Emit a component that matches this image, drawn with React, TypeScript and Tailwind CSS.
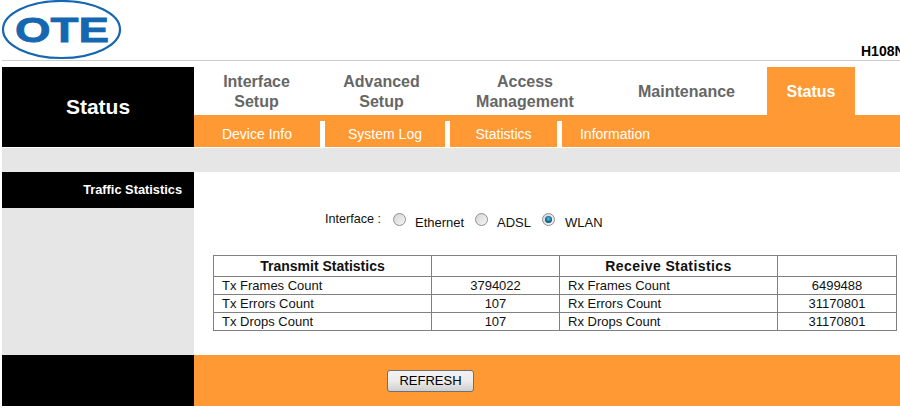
const F = "font-['Liberation_Sans',Arial,sans-serif]";

function Logo() {
  return (
    <svg width="122" height="60" viewBox="0 0 122 60" className="block">
      <ellipse cx="60.5" cy="29.5" rx="58.5" ry="28.5" fill="#fff" stroke="#1467b0" strokeWidth="2.2" />
      <text
        x="61"
        y="42"
        textAnchor="middle"
        textLength="94"
        lengthAdjust="spacingAndGlyphs"
        fontFamily="'Liberation Sans', Arial, sans-serif"
        fontWeight="700"
        fontSize="35"
        fill="#1467b0"
        stroke="#1467b0"
        strokeWidth="0.8"
      >
        OTE
      </text>
    </svg>
  );
}

function Tab({ w, lines, active }: { w: string; lines: string[]; active?: boolean }) {
  return (
    <div
      className={`${w} flex flex-col items-center justify-center pt-[2px] text-center text-[16px] leading-[20px] font-bold ${
        active ? "bg-[#ff9933] text-white" : "text-[#666666]"
      }`}
    >
      {lines.map((l) => (
        <span key={l}>{l}</span>
      ))}
    </div>
  );
}

function Sub({ w, label, last }: { w: string; label: string; last?: boolean }) {
  return (
    <div className={`${w} h-[26px] flex items-center justify-center text-[14px] text-white ${last ? "" : "border-r-[5px] border-white"}`}>
      {label}
    </div>
  );
}

function Radio({ on }: { on?: boolean }) {
  return (
    <span className="relative block w-[13px] h-[13px] rounded-full border border-[#8e8f8f] bg-gradient-to-br from-[#d5d5d5] to-[#f6f6f6]">
      {on && (
        <span className="absolute left-[2px] top-[2px] w-[7px] h-[7px] rounded-full bg-[radial-gradient(circle_at_50%_40%,#5fc0e8,#0b5f8d_60%,#123a52)]" />
      )}
    </span>
  );
}

const rows = [
  ["Tx Frames Count", "3794022", "Rx Frames Count", "6499488"],
  ["Tx Errors Count", "107", "Rx Errors Count", "31170801"],
  ["Tx Drops Count", "107", "Rx Drops Count", "31170801"],
];

export default function App() {
  return (
    <div className={`${F} w-[900px] h-[409px] overflow-hidden bg-white text-black`}>
      <div className="h-[60px] w-[900px] flex items-start">
        <div className="pl-[1px]">
          <Logo />
        </div>
        <div className="ml-auto self-end pb-[1px] w-[39px] overflow-hidden whitespace-nowrap text-[14px] leading-[16px] font-bold">
          H108N
        </div>
      </div>
      <div className="h-[1px] ml-[2px] bg-[#cccccc]" />
      <div className="h-[6px]" />
      <div className="flex ml-[2px] h-[80px]">
        <div className="w-[192px] bg-black text-white font-bold text-[21px] flex items-center justify-center pb-[1px]">
          Status
        </div>
        <div className="flex-1 flex flex-col">
          <div className="h-[48px] flex">
            <Tab w="w-[125px]" lines={["Interface", "Setup"]} />
            <Tab w="w-[125px]" lines={["Advanced", "Setup"]} />
            <Tab w="w-[162px]" lines={["Access", "Management"]} />
            <Tab w="w-[161px]" lines={["Maintenance"]} />
            <Tab w="w-[88px]" lines={["Status"]} active />
          </div>
          <div className="h-[32px] bg-[#ff9933] flex items-end">
            <Sub w="w-[131px]" label="Device Info" />
            <Sub w="w-[125px]" label="System Log" />
            <Sub w="w-[112px]" label="Statistics" />
            <Sub w="w-[106px]" label="Information" last />
          </div>
        </div>
      </div>
      <div className="h-[1px]" />
      <div className="ml-[2px] h-[24px] bg-[#e6e6e6]" />
      <div className="ml-[2px] flex h-[183px]">
        <div className="w-[192px] bg-[#e6e6e6]">
          <div className="h-[36px] bg-black text-white font-bold text-[12.8px] flex items-center justify-end pr-[12px]">
            Traffic Statistics
          </div>
        </div>
        <div className="flex-1 pl-[19px]">
          <div className="h-[83px] pt-[39px] pl-[112px] flex items-start text-[12.6px] leading-[16px] text-[#111]">
            <span className="w-[68px]">Interface :</span>
            <span className="mt-[2px]"><Radio /></span>
            <span className="ml-[9px] mt-[4px] w-[60px] text-[13px]">Ethernet</span>
            <span className="mt-[2px]"><Radio /></span>
            <span className="ml-[9px] mt-[4px] w-[45px] text-[13px]">ADSL</span>
            <span className="mt-[2px]"><Radio on /></span>
            <span className="ml-[10px] mt-[4px] text-[13px]">WLAN</span>
          </div>
          <table className="w-[683px] table-fixed border-collapse text-[13px] leading-[17px] text-[#111]">
            <colgroup>
              <col className="w-[218px]" />
              <col className="w-[128px]" />
              <col className="w-[218px]" />
              <col className="w-[119px]" />
            </colgroup>
            <thead>
              <tr className="h-[21px]">
                <th className="border border-[#808080] text-[14px] font-bold text-center">Transmit Statistics</th>
                <th className="border border-[#808080]" />
                <th className="border border-[#808080] text-[14px] tracking-[0.4px] font-bold text-center">Receive Statistics</th>
                <th className="border border-[#808080]" />
              </tr>
            </thead>
            <tbody>
              {rows.map((r) => (
                <tr key={r[0]} className="h-[18px]">
                  <td className="border border-[#808080] pl-[8px]">{r[0]}</td>
                  <td className="border border-[#808080] text-center">{r[1]}</td>
                  <td className="border border-[#808080] pl-[8px]">{r[2]}</td>
                  <td className="border border-[#808080] text-center">{r[3]}</td>
                </tr>
              ))}
            </tbody>
          </table>
        </div>
      </div>
      <div className="ml-[2px] flex h-[51px]">
        <div className="w-[192px] bg-black" />
        <div className="flex-1 bg-[#ff9933] pl-[193px] pt-[15px]">
          <button className="block w-[87px] h-[22px] rounded-[3px] border border-[#707070] bg-gradient-to-b from-[#f2f2f2] via-[#ebebeb] to-[#cfcfcf] text-[13px] leading-[18px] text-black">
            REFRESH
          </button>
        </div>
      </div>
    </div>
  );
}
